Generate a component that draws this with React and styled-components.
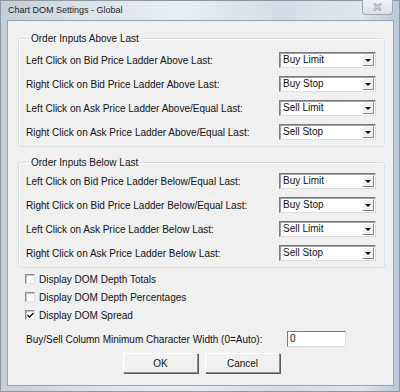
import React from 'react';
import styled, { createGlobalStyle } from 'styled-components';

const GlobalStyle = createGlobalStyle`
  html, body {
    margin: 0;
    padding: 0;
    background: #6d8fb5;
  }
  body {
    font-family: "Liberation Sans", Arial, sans-serif;
    color: #111;
  }
`;

const Window = styled.div`
  width: 400px;
  height: 392px;
  box-sizing: border-box;
  display: flex;
  flex-direction: column;
  padding: 0 6px 6px 7px;
  background: linear-gradient(90deg, #c4ced8 0%, #d9e1e9 20%, #e9eef3 45%, #d3dce5 70%, #dfe6ed 90%, #b9c7d6 100%);
  box-shadow: inset 0 0 0 1px #8e989f;
`;

const TitleBar = styled.div`
  height: 20px;
  display: flex;
  align-items: flex-start;
  justify-content: space-between;
  flex-shrink: 0;
`;

const Title = styled.div`
  padding: 5px 0 0 1px;
  font-size: 9px;
  line-height: 11px;
  color: #1c1c1c;
`;

const CloseButton = styled.div`
  width: 31px;
  height: 15px;
  margin-right: 1px;
  box-sizing: border-box;
  border: 1px solid #9ea8b2;
  border-top: none;
  border-radius: 0 0 4px 4px;
  background: linear-gradient(#eef2f6, #d9e0e7);
  display: flex;
  align-items: center;
  justify-content: center;
`;

const Client = styled.div`
  flex: 1;
  box-sizing: border-box;
  border: 1px solid #98a4b0;
  background: #f0f0f0;
  padding: 11px 8px 0 10px;
  display: flex;
  flex-direction: column;
`;

const Group = styled.fieldset`
  margin: 0 0 ${p => p.$gap}px 0;
  padding: ${p => p.$top}px 7px 2px 7px;
  border: 1px solid #d5dfe5;
  border-radius: 3px;
  box-shadow: inset 1px 1px 0 #fff;
  min-width: 0;
`;

const Legend = styled.legend`
  padding: 0 2px;
  margin-left: 3px;
  font-size: 10px;
  line-height: 13px;
`;

const Row = styled.div`
  height: 24px;
  display: flex;
  align-items: center;
  justify-content: space-between;
  font-size: 10px;
`;

const Combo = styled.div`
  width: 97px;
  height: 16px;
  margin-right: 1px;
  box-sizing: border-box;
  display: flex;
  align-items: stretch;
  background: #fff;
  border: 1px solid;
  border-color: #7a7a7a #dcdcdc #dcdcdc #7a7a7a;
  box-shadow: inset 1px 1px 0 #a0a0a0;
`;

const ComboValue = styled.div`
  flex: 1;
  padding-left: 3px;
  font-size: 10px;
  line-height: 14px;
`;

const ArrowButton = styled.div`
  width: 12px;
  margin: 1px 1px 1px 0;
  box-sizing: border-box;
  background: #f0f0f0;
  border: 1px solid;
  border-color: #fff #8a8a8a #8a8a8a #fff;
  display: flex;
  align-items: center;
  justify-content: center;

  &::after {
    content: "";
    border-left: 3px solid transparent;
    border-right: 3px solid transparent;
    border-top: 3px solid #000;
  }
`;

const Options = styled.div`
  display: flex;
  flex-direction: column;
  padding: 2px 0 0 7px;
`;

const CheckRow = styled.label`
  height: 18px;
  display: flex;
  align-items: center;
  gap: 4px;
  font-size: 10px;
`;

const Box = styled.span`
  width: 10px;
  height: 10px;
  box-sizing: border-box;
  background: #fff;
  border: 1px solid;
  border-color: #8a8a8a #e4e4e4 #e4e4e4 #8a8a8a;
  box-shadow: inset 1px 1px 0 #c8c8c8;
  display: flex;
  align-items: center;
  justify-content: center;
`;

const WidthRow = styled.div`
  height: 20px;
  margin-top: 5px;
  display: flex;
  align-items: center;
  padding-left: 8px;
  font-size: 10px;
`;

const WidthLabel = styled.span`
  width: 261px;
`;

const TextInput = styled.div`
  width: 59px;
  height: 16px;
  box-sizing: border-box;
  background: #fff;
  border: 1px solid;
  border-color: #7a7a7a #dcdcdc #dcdcdc #7a7a7a;
  padding-left: 2px;
  font-size: 10px;
  line-height: 14px;
`;

const Buttons = styled.div`
  display: flex;
  justify-content: center;
  gap: 7px;
  margin-top: 4px;
`;

const Button = styled.div`
  width: 75px;
  height: 20px;
  box-sizing: border-box;
  border: 1px solid;
  border-color: #fff #8c8c8c #8c8c8c #fff;
  box-shadow: 1px 1px 0 #5a5a5a;
  background: #f0f0f0;
  display: flex;
  align-items: center;
  justify-content: center;
  font-size: 10px;
`;

const Check = () => (
  <svg width="7" height="7" viewBox="0 0 7 7">
    <path d="M0.5 3 L2.5 5 L6.5 1" fill="none" stroke="#111" strokeWidth="1.4" />
  </svg>
);

const ComboBox = ({ value }) => (
  <Combo>
    <ComboValue>{value}</ComboValue>
    <ArrowButton />
  </Combo>
);

const above = [
  ['Left Click on Bid Price Ladder Above Last:', 'Buy Limit'],
  ['Right Click on Bid Price Ladder Above Last:', 'Buy Stop'],
  ['Left Click on Ask Price Ladder Above/Equal Last:', 'Sell Limit'],
  ['Right Click on Ask Price Ladder Above/Equal Last:', 'Sell Stop'],
];

const below = [
  ['Left Click on Bid Price Ladder Below/Equal Last:', 'Buy Limit'],
  ['Right Click on Bid Price Ladder Below/Equal Last:', 'Buy Stop'],
  ['Left Click on Ask Price Ladder Below Last:', 'Sell Limit'],
  ['Right Click on Ask Price Ladder Below Last:', 'Sell Stop'],
];

const checks = [
  ['Display DOM Depth Totals', false],
  ['Display DOM Depth Percentages', false],
  ['Display DOM Spread', true],
];

export default function App() {
  return (
    <>
      <GlobalStyle />
      <Window>
        <TitleBar>
          <Title>Chart DOM Settings - Global</Title>
          <CloseButton>
            <svg width="9" height="8" viewBox="0 0 9 8">
              <path d="M1 0.5 L8 7.5 M8 0.5 L1 7.5" stroke="#8d96a0" strokeWidth="2.4" />
              <path d="M1 0.5 L8 7.5 M8 0.5 L1 7.5" stroke="#f4f6f8" strokeWidth="1" />
            </svg>
          </CloseButton>
        </TitleBar>
        <Client>
          <Group $gap={9} $top={3}>
            <Legend>Order Inputs Above Last</Legend>
            {above.map(([label, value]) => (
              <Row key={label}>
                <span>{label}</span>
                <ComboBox value={value} />
              </Row>
            ))}
          </Group>
          <Group $gap={0} $top={0}>
            <Legend>Order Inputs Below Last</Legend>
            {below.map(([label, value]) => (
              <Row key={label}>
                <span>{label}</span>
                <ComboBox value={value} />
              </Row>
            ))}
          </Group>
          <Options>
            {checks.map(([label, on]) => (
              <CheckRow key={label}>
                <Box>{on && <Check />}</Box>
                {label}
              </CheckRow>
            ))}
          </Options>
          <WidthRow>
            <WidthLabel>Buy/Sell Column Minimum Character Width (0=Auto):</WidthLabel>
            <TextInput>0</TextInput>
          </WidthRow>
          <Buttons>
            <Button>OK</Button>
            <Button>Cancel</Button>
          </Buttons>
        </Client>
      </Window>
    </>
  );
}
